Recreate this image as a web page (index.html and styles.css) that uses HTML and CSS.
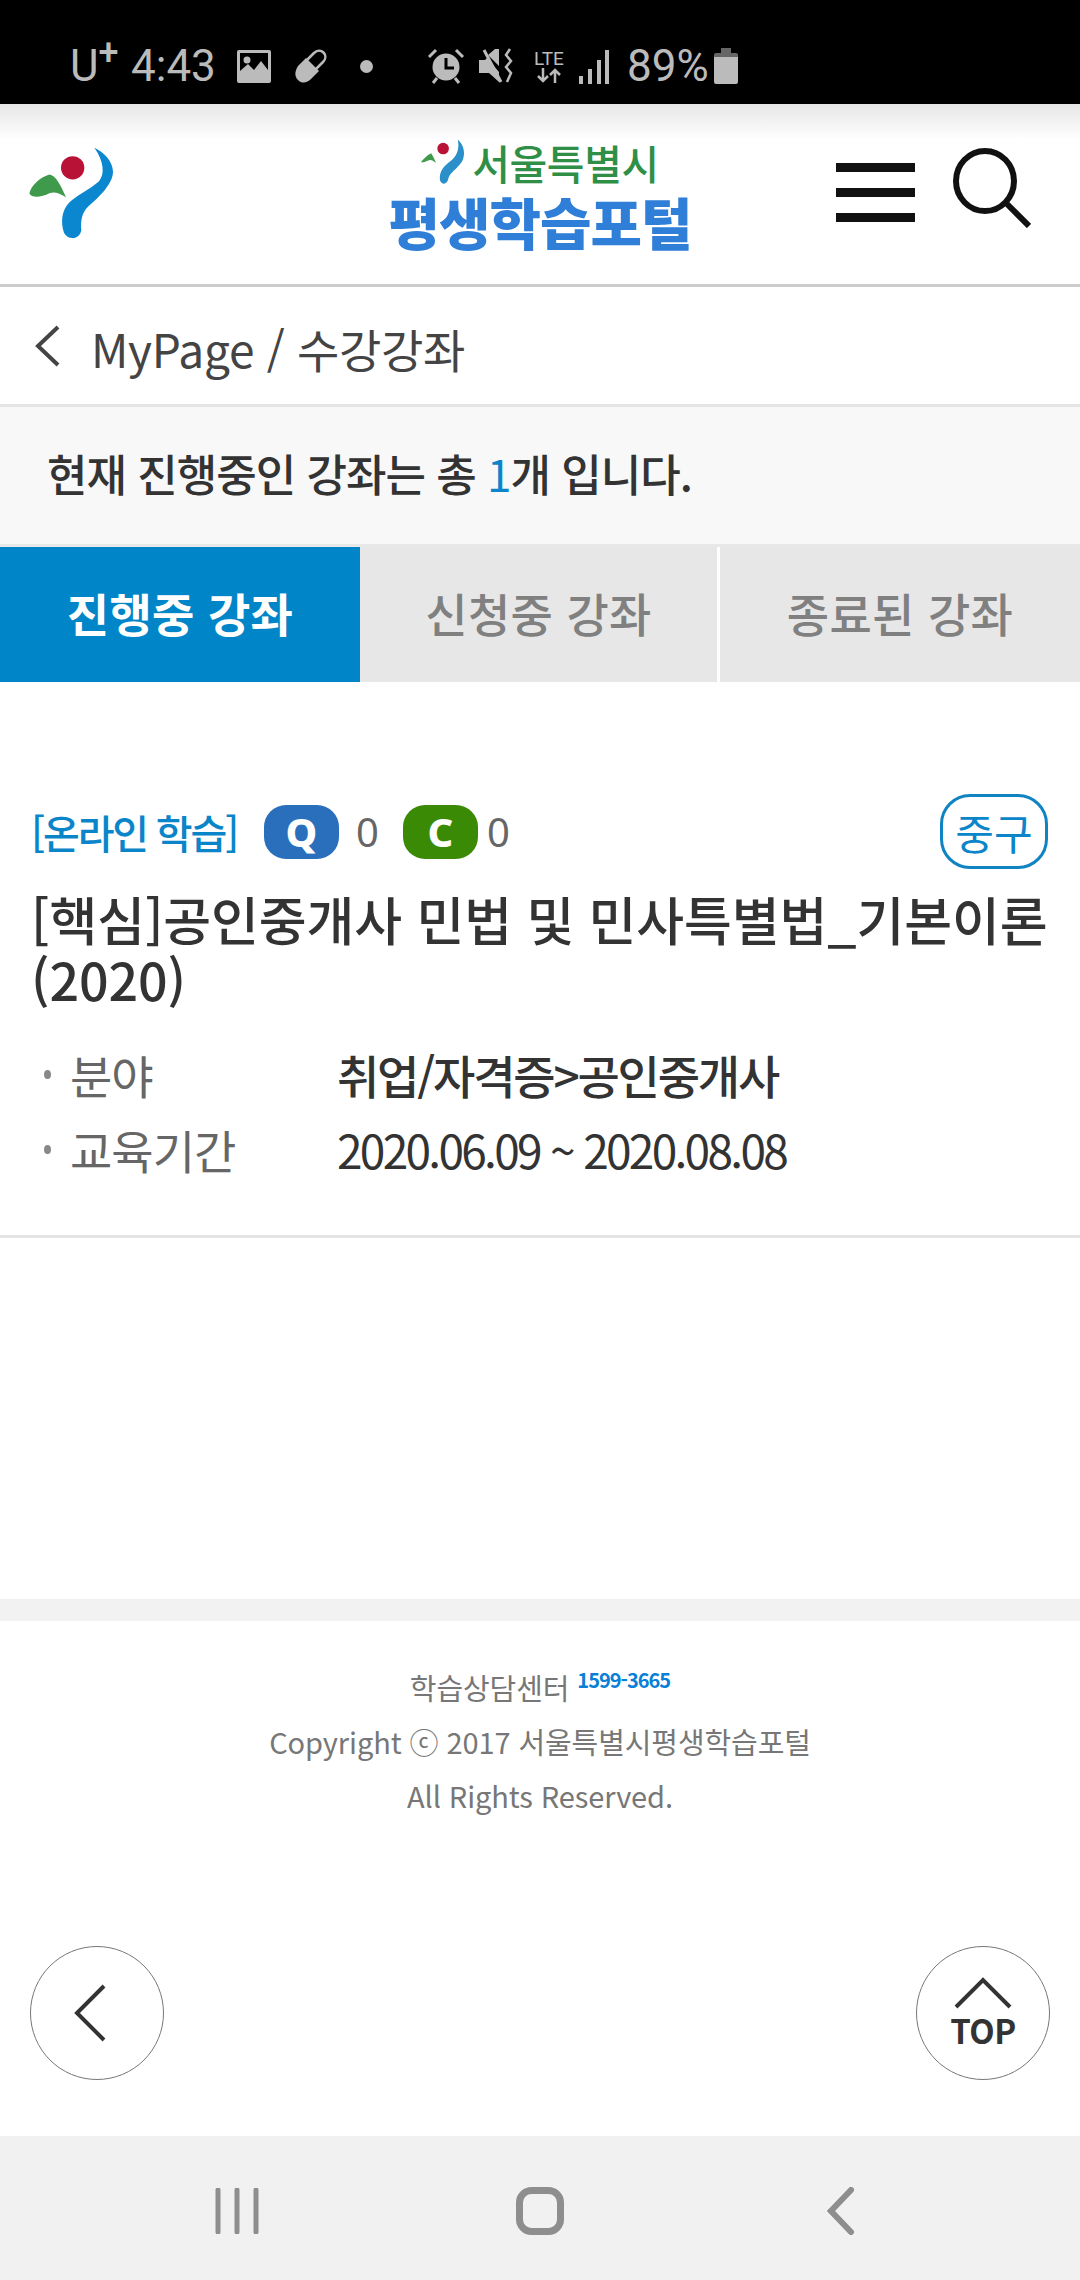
FILE: index.html
```html
<!DOCTYPE html>
<html lang="ko">
<head>
    <meta charset="UTF-8">
    <meta name="viewport" content="width=device-width, initial-scale=1.0">
    <title>MyPage / 수강강좌</title>
    <link rel="stylesheet" href="styles.css">
</head>
<body>

    <div class="status-bar">
        <span class="carrier">U<sup>+</sup></span>
        <span class="clock">4:43</span>
        <svg class="st-image" width="34" height="33" viewBox="0 0 34 33"><path fill="#bbb" fill-rule="evenodd" d="M2 0h30a2 2 0 0 1 2 2v29a2 2 0 0 1-2 2H2a2 2 0 0 1-2-2V2a2 2 0 0 1 2-2zM3 3v18l8-7 6 6 7-9 7 9V3z"/><circle cx="10" cy="10" r="3.5" fill="#bbb"/></svg>
        <svg class="st-pill" width="35" height="35" viewBox="0 0 35 35"><path fill="none" stroke="#bbb" stroke-width="2.5" d="M14 11l7-7c3-3 7-3 9.500-.5s2.500 6.500-.5 9.500l-7 7"/><path fill="#bbb" d="M13 9l13 13-8 8c-4 4-9 5-13 1s-3-9 0-14z"/></svg>
        <span class="st-dot"></span>
        <svg class="st-alarm" width="38" height="36" viewBox="0 0 38 36"><circle cx="19" cy="19" r="13.500" fill="#bbb"/><path stroke="#000" stroke-width="3" fill="none" d="M19 10v10h8"/><path stroke="#bbb" stroke-width="3" fill="none" d="M2 9l7-7M36 9l-7-7M6 35l4-5M32 35l-4-5"/></svg>
        <svg class="st-mute" width="36" height="36" viewBox="0 0 36 36"><path fill="#bbb" d="M0 12h6l2-2 12 14v10l-10-9H0zM9 7l7-6h4v17z"/><path stroke="#bbb" stroke-width="3" fill="none" d="M5 2l17 32"/><path stroke="#bbb" stroke-width="2.500" fill="none" d="M31 1l-4 6 5 6-5 6 5 6-4 9"/></svg>
        <div class="st-lte">
            <span>LTE</span>
            <svg width="26" height="15" viewBox="0 0 26 15"><path stroke="#bbb" stroke-width="2.500" fill="none" d="M7 0v13M2 8l5 5 5-5M19 15V2M14 7l5-5 5 5"/></svg>
        </div>
        <svg class="st-signal" width="30" height="35" viewBox="0 0 30 35"><path fill="#bbb" d="M0 27h4v8H0zM9 20h4v15H9zM18 11h4v24h-4zM26 1h4v34h-4z"/></svg>
        <span class="battery-text">89%</span>
        <svg class="st-battery" width="24" height="36" viewBox="0 0 24 36"><path fill="#666" d="M7 0h10v5H7z"/><path fill="#666" d="M2 5h20a2 2 0 0 1 2 2v2H0V7a2 2 0 0 1 2-2z"/><path fill="#bbb" d="M0 9h24v25a2 2 0 0 1-2 2H2a2 2 0 0 1-2-2z"/></svg>
    </div>

    <header class="site-header">
        <svg class="seoul-mark" width="90" height="97" viewBox="80 80 270 290">
            <circle cx="220" cy="148" r="35" fill="#b81237"/>
            <path fill="#3f9a4c" d="M90 225c5-25 35-50 60-57 20 2 35 35 50 68-20-12-35-18-50-12-20 10-50 18-60 1z"/>
            <path fill="#0a87cf" d="M285 88c30 15 55 40 56 72 0 35-40 75-75 105-20 20-22 45-20 70-5 28-40 32-52 8-10-30-8-65 15-90 25-25 55-35 90-65 18-20 15-60-14-100z"/>
        </svg>

        <div class="portal-logo">
            <div class="logo-top">
                <svg width="46" height="46" viewBox="150 60 135 135">
                    <circle cx="215" cy="88" r="17" fill="#b81237"/>
                    <path fill="#3f9a4c" d="M150 128c8-10 20-22 30-26 5 8 10 18 14 28-8-6-14-10-20-8-8 2-16 8-24 6z"/>
                    <path fill="#2b8fc9" d="M258 62c18 15 24 40 12 65-14 22-35 30-40 50-2 15-18 20-24 5-4-22 8-40 28-55 20-15 30-35 24-65z"/>
                </svg>
                <span>서울특별시</span>
            </div>
            <div class="logo-main">평생학습포털</div>
        </div>

        <div class="header-icons">
            <div class="hamburger"><span></span><span></span><span></span></div>
            <svg width="78" height="80" viewBox="0 0 78 80">
                <ellipse cx="32" cy="33" rx="29" ry="30" fill="none" stroke="#111" stroke-width="6"/>
                <path d="M54 56l22 22" stroke="#111" stroke-width="6" fill="none"/>
            </svg>
        </div>
    </header>

    <div class="breadcrumb">
        <svg width="26" height="42" viewBox="0 0 26 42"><path d="M24 2L4 21l20 19" fill="none" stroke="#444" stroke-width="4"/></svg>
        <span>MyPage / 수강강좌</span>
    </div>

    <div class="summary">현재 진행중인 강좌는 총 <em>1</em>개 입니다.</div>

    <div class="tabs">
        <div class="tab active">진행중 강좌</div>
        <div class="tab">신청중 강좌</div>
        <div class="tab">종료된 강좌</div>
    </div>

    <section class="course">
        <div class="course-meta">
            <span class="course-type">[온라인 학습]</span>
            <span class="badge badge-q">Q</span>
            <span class="count">0</span>
            <span class="badge badge-c">C</span>
            <span class="count count-c">0</span>
            <span class="region">중구</span>
        </div>
        <h2 class="course-title">[핵심]공인중개사 민법 및 민사특별법_기본이론(2020)</h2>
        <dl class="course-info">
            <div class="info-row">
                <dt>분야</dt>
                <dd class="strong">취업/자격증&gt;공인중개사</dd>
            </div>
            <div class="info-row">
                <dt>교육기간</dt>
                <dd class="dates">2020.06.09 ~ 2020.08.08</dd>
            </div>
        </dl>
    </section>

    <div class="band"></div>

    <footer class="site-footer">
        <p>학습상담센터 <a class="phone">1599-3665</a></p>
        <p>Copyright ⓒ 2017 서울특별시평생학습포털</p>
        <p>All Rights Reserved.</p>
    </footer>

    <div class="float-buttons">
        <div class="round-btn round-back">
            <svg width="34" height="58" viewBox="0 0 34 58"><path d="M31 2L4 29l27 27" fill="none" stroke="#333" stroke-width="4"/></svg>
        </div>
        <div class="round-btn round-top">
            <svg width="58" height="34" viewBox="0 0 58 34"><path d="M2 31L29 4l27 27" fill="none" stroke="#333" stroke-width="4"/></svg>
            <span>TOP</span>
        </div>
    </div>

    <nav class="nav-bar">
        <svg width="44" height="46" viewBox="0 0 44 46"><path d="M3 2v42M22 2v42M41 2v42" stroke="#8e8e8e" stroke-width="5" stroke-linecap="round" fill="none"/></svg>
        <svg class="nav-home" width="48" height="48" viewBox="0 0 48 48"><rect x="3.500" y="3.500" width="41" height="41" rx="12" fill="none" stroke="#8e8e8e" stroke-width="7"/></svg>
        <svg width="28" height="48" viewBox="0 0 28 48"><path d="M24 3L4 24l20 21" stroke="#8e8e8e" stroke-width="6" stroke-linecap="round" fill="none"/></svg>
    </nav>

</body>
</html>
```

FILE: styles.css
```css
* {
    box-sizing: border-box;
}

body {
    font-family: "Noto Sans CJK KR", "Noto Sans", sans-serif;
    margin: 0;
    padding: 0;
    width: 1080px;
    height: 2280px;
    background-color: white;
    color: #333;
    overflow: hidden;
}

/* status bar */
.status-bar {
    height: 104px;
    background-color: black;
    color: #bbb;
    display: flex;
    align-items: center;
    padding: 28px 0 0 70px;
    font-family: Roboto, sans-serif;
    font-weight: 400;
}

.carrier {
    font-size: 44px;
    width: 61px;
}

.carrier sup {
    font-size: 36px;
    font-weight: 500;
    line-height: 0;
}

.clock {
    font-size: 44px;
    width: 106px;
}

.st-pill {
    margin-left: 22px;
}

.st-dot {
    width: 13px;
    height: 13px;
    border-radius: 50%;
    background-color: #bbb;
    margin-left: 32px;
}

.st-alarm {
    margin-left: 54px;
}

.st-mute {
    margin-left: 14px;
}

.st-lte {
    margin-left: 17px;
    width: 34px;
    display: flex;
    flex-direction: column;
    align-items: center;
    font-size: 19px;
    font-weight: 400;
    line-height: 19px;
}

.st-signal {
    margin-left: 13px;
}

.battery-text {
    font-size: 44px;
    margin-left: 18px;
    width: 87px;
}

/* header */
.site-header {
    height: 183px;
    border-bottom: 3px solid #ccc;
    background: linear-gradient(to bottom, #e6e6e6 0, #fff 36px);
    display: flex;
    padding: 41px 0 0 26px;
}

.portal-logo {
    margin-left: 269px;
    width: 310px;
    margin-top: -6px;
}

.logo-top {
    display: flex;
    align-items: center;
    justify-content: center;
    gap: 5px;
    color: #2f8f47;
    font-size: 41px;
    line-height: 46px;
    letter-spacing: -0.4px;
    font-weight: 500;
}

.logo-main {
    color: #2f7fd8;
    font-size: 56px;
    line-height: 64px;
    margin-top: 4px;
    font-weight: 900;
    letter-spacing: -1px;
    text-align: center;
}

.header-icons {
    display: flex;
    margin-left: 141px;
    padding-top: 3px;
}

.hamburger {
    width: 79px;
    height: 59px;
    margin-top: 15px;
    display: flex;
    flex-direction: column;
    justify-content: space-between;
}

.hamburger span {
    height: 9px;
    background-color: #111;
}

.header-icons svg {
    margin-left: 38px;
}

/* breadcrumb */
.breadcrumb {
    height: 120px;
    border-bottom: 3px solid #e5e5e5;
    display: flex;
    align-items: center;
    padding-left: 34px;
    font-size: 46px;
    letter-spacing: -0.3px;
    color: #444;
}

.breadcrumb span {
    margin-left: 31px;
    padding-top: 5px;
}

.summary {
    height: 140px;
    padding: 0 0 5px 47px;
    background-color: #f8f8f8;
    border-bottom: 3px solid #e8e8e8;
    display: flex;
    align-items: center;
    font-size: 44px;
    font-weight: 500;
    letter-spacing: -1px;
    color: #333;
    white-space: pre-wrap;
}

.summary em {
    font-style: normal;
    font-weight: 400;
    color: #0a85c9;
}

/* tabs */
.tabs {
    display: grid;
    grid-template-columns: 360px 357px 1fr;
    height: 135px;
}

.tab {
    background-color: #e7e7e7;
    color: #808080;
    font-size: 46px;
    font-weight: 500;
    padding-bottom: 5px;
    letter-spacing: 0.3px;
    display: flex;
    align-items: center;
    justify-content: center;
}

.tab:last-child {
    margin-left: 3px;
}

.tab.active {
    background-color: #0086c8;
    color: white;
    font-weight: 700;
}

/* course */
.course {
    height: 556px;
    padding: 112px 32px 0 31px;
    border-bottom: 3px solid #e5e5e5;
}

.course-meta {
    display: flex;
    align-items: center;
    height: 75px;
}

.course-type {
    color: #0a85c9;
    font-size: 40px;
    font-weight: 500;
    letter-spacing: -2.2px;
    width: 233px;
}

.badge {
    width: 75px;
    height: 54px;
    border-radius: 22px;
    color: white;
    font-family: "Noto Sans", sans-serif;
    font-weight: 800;
    font-size: 40px;
    display: flex;
    align-items: center;
    justify-content: center;
}

.badge-q {
    background-color: #2a6fbb;
}

.badge-c {
    background-color: #3b8a06;
}

.count {
    color: #666;
    font-size: 40px;
    font-family: "Noto Sans", sans-serif;
    width: 64px;
    padding-left: 17px;
}

.count-c {
    padding-left: 9px;
}

.region {
    margin-left: auto;
    width: 108px;
    height: 75px;
    border: 3px solid #1083c2;
    border-radius: 30px;
    color: #0a85c9;
    font-size: 42px;
    display: flex;
    align-items: center;
    justify-content: center;
}

.course-title {
    margin: 20px 0 0;
    font-size: 52px;
    font-weight: 500;
    line-height: 60px;
    letter-spacing: -0.1px;
    color: #333;
}

.course-info {
    margin: 27px 0 0;
}

.info-row {
    display: flex;
    height: 75px;
    align-items: center;
    font-size: 46px;
}

.info-row dt {
    width: 306px;
    padding-left: 39px;
    color: #666;
    letter-spacing: -1px;
    position: relative;
}

.info-row dt::before {
    content: "";
    position: absolute;
    left: 13px;
    top: 45%;
    width: 7px;
    height: 9px;
    border-radius: 50%;
    background-color: #888;
}

.info-row dd {
    margin: 0;
    color: #333;
    letter-spacing: -2.2px;
}

.info-row dd.dates {
    letter-spacing: -2.7px;
}

.info-row dd.strong {
    font-weight: 500;
}

/* footer */
.band {
    height: 22px;
    margin-top: 361px;
    background-color: #f2f2f2;
}

.site-footer {
    height: 325px;
    padding-top: 32px;
    text-align: center;
    font-size: 29px;
    letter-spacing: -0.1px;
    color: #777;
}

.site-footer p {
    margin: 0;
    line-height: 54px;
}

.phone {
    color: #0a7fd6;
    font-size: 20px;
    font-weight: 700;
    letter-spacing: -1px;
    vertical-align: 12px;
}

.float-buttons {
    display: flex;
    justify-content: space-between;
    padding: 0 30px;
    height: 190px;
}

.round-btn {
    width: 134px;
    height: 134px;
    border: 1px solid #777;
    border-radius: 50%;
    display: flex;
    flex-direction: column;
    align-items: center;
    justify-content: center;
}

.round-back svg {
    margin-right: 15px;
}

.round-top span {
    font-size: 33px;
    font-weight: 700;
    letter-spacing: -0.5px;
    line-height: 40px;
    color: #333;
}

.nav-bar {
    height: 145px;
    background-color: #f1f1f1;
    display: flex;
    align-items: center;
    padding: 5px 225px 0 215px;
    justify-content: space-between;
}

.nav-home {
    margin-left: -6px;
}
```
